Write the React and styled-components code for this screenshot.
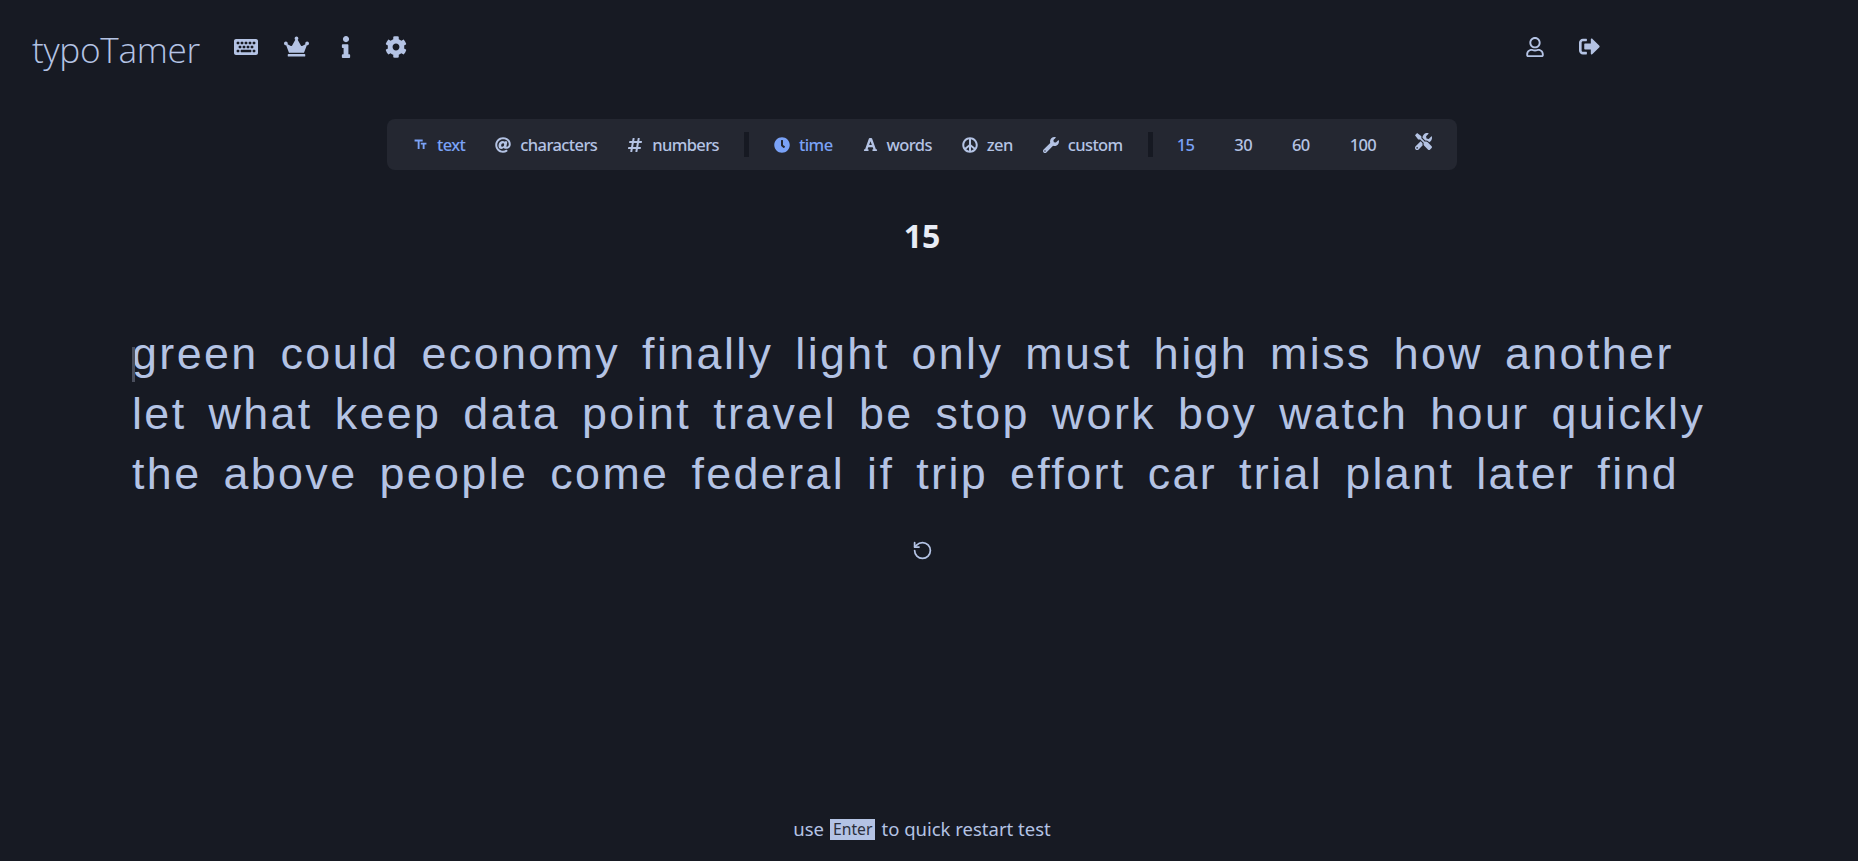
import React from "react";
import styled, { createGlobalStyle } from "styled-components";
import { FaKeyboard, FaCrown, FaInfo, FaCog, FaRegUser, FaSignOutAlt, FaClock, FaFont, FaPeace, FaWrench, FaTools, FaAt, FaHashtag } from "react-icons/fa";
import { MdTextFields } from "react-icons/md";
import { RotateCcw } from "lucide-react";

const C = { bg: "#171a23", fg: "#b4c3e4", blue: "#7aa2f7", panel: "#242731", sep: "#161922" };

const Global = createGlobalStyle`
  html, body { margin: 0; padding: 0; background: ${C.bg}; }
  body { font-family: "Noto Sans", sans-serif; color: ${C.fg}; }
`;

const Page = styled.div`
  width: 1844px;
  min-height: 100vh;
  box-sizing: border-box;
  display: flex;
  flex-direction: column;
  align-items: stretch;
`;

const Header = styled.header`
  height: 95px;
  display: flex;
  align-items: center;
  padding: 0 227px 0 32px;
`;

const Logo = styled.div`
  font-family: "Open Sans", sans-serif;
  font-weight: 300;
  font-size: 35.2px;
  letter-spacing: -0.3px;
  color: ${C.fg};
  margin: 2px 21px 0 0;
`;

const IconGroup = styled.nav`
  display: flex;
  align-items: center;
  margin-left: ${(p) => (p.$right ? "auto" : "0")};
  color: ${C.fg};
  transform: translateY(-1px);
`;

const IconCell = styled.span`
  width: ${(p) => p.$w}px;
  display: flex;
  justify-content: center;
`;

const Toolbar = styled.div`
  align-self: center;
  margin-top: 24px;
  width: 1070px;
  height: 51px;
  box-sizing: border-box;
  background: ${C.panel};
  border-radius: 8px;
  display: flex;
  align-items: center;
  padding: 0 11px;
  font-size: 16.5px;
  letter-spacing: -0.6px;
`;

const Item = styled.div`
  display: flex;
  align-items: center;
  gap: 9px;
  padding: 0 15px;
  color: ${(p) => (p.$active ? C.blue : C.fg)};
  font-weight: 500;
  white-space: nowrap;
  & > svg { flex: none; }
`;

const NumItem = styled(Item)`
  padding: 0 20px;
`;

const ToolIcon = styled(Item)`
  padding: 0 0 0 19px;
  transform: translateY(-3px);
`;

const Divider = styled.span`
  width: 5px;
  height: 25px;
  flex: none;
  background: ${C.sep};
  margin: 0 ${(p) => p.$after ?? 10}px 0 10px;
`;

const Counter = styled.div`
  margin-top: 44px;
  text-align: center;
  font-family: "Open Sans", sans-serif;
  font-weight: 700;
  font-size: 32px;
  line-height: 44px;
  color: #e8ecf5;
`;

const Words = styled.div`
  position: relative;
  margin: 65px 132px 0;
  font-family: "Liberation Sans", Arial, sans-serif;
  font-size: 44.8px;
  line-height: 60px;
  letter-spacing: 2.4px;
  word-spacing: 7.1px;
  color: ${C.fg};
`;

const Caret = styled.span`
  position: absolute;
  left: 0;
  top: 24px;
  width: 2.5px;
  height: 35px;
  background: #4a4e5c;
`;

const Reload = styled.div`
  margin-top: 37px;
  display: flex;
  justify-content: center;
  color: ${C.fg};
`;

const Footer = styled.footer`
  margin-top: auto;
  padding-bottom: 19px;
  display: flex;
  justify-content: center;
  align-items: center;
  gap: 6px;
  font-size: 18.5px;
  line-height: 26px;
  color: ${C.fg};
`;

const Kbd = styled.kbd`
  font-family: "Noto Sans", sans-serif;
  background: ${C.fg};
  color: #2a2e3b;
  font-size: 15.7px;
  line-height: 21px;
  padding: 0 3px;
  margin-top: 1px;
`;

export default function App() {
  return (
    <Page>
      <Global />
      <Header>
        <Logo>typoTamer</Logo>
        <IconGroup>
          <IconCell $w={50}><FaKeyboard size={24} /></IconCell>
          <IconCell $w={50}><FaCrown size={25} /></IconCell>
          <IconCell $w={50}><FaInfo size={22} /></IconCell>
          <IconCell $w={50}><FaCog size={22} /></IconCell>
        </IconGroup>
        <IconGroup $right>
          <IconCell $w={55}><FaRegUser size={20} /></IconCell>
          <IconCell $w={55}><FaSignOutAlt size={21} /></IconCell>
        </IconGroup>
      </Header>
      <Toolbar>
        <Item $active><MdTextFields size={15} />text</Item>
        <Item><FaAt size={16} />characters</Item>
        <Item><FaHashtag size={16} />numbers</Item>
        <Divider />
        <Item $active><FaClock size={16} />time</Item>
        <Item><FaFont size={15} />words</Item>
        <Item><FaPeace size={16} />zen</Item>
        <Item><FaWrench size={16} />custom</Item>
        <Divider $after={4} />
        <NumItem $active>15</NumItem>
        <NumItem>30</NumItem>
        <NumItem>60</NumItem>
        <NumItem>100</NumItem>
        <ToolIcon><FaTools size={17} /></ToolIcon>
      </Toolbar>
      <Counter>15</Counter>
      <Words>
        <Caret />
        green could economy finally light only must high miss how another let what keep data point travel be stop work boy watch hour quickly the above people come federal if trip effort car trial plant later find
      </Words>
      <Reload><RotateCcw size={21} strokeWidth={2} /></Reload>
      <Footer>
        <span>use</span><Kbd>Enter</Kbd><span>to quick restart test</span>
      </Footer>
    </Page>
  );
}
